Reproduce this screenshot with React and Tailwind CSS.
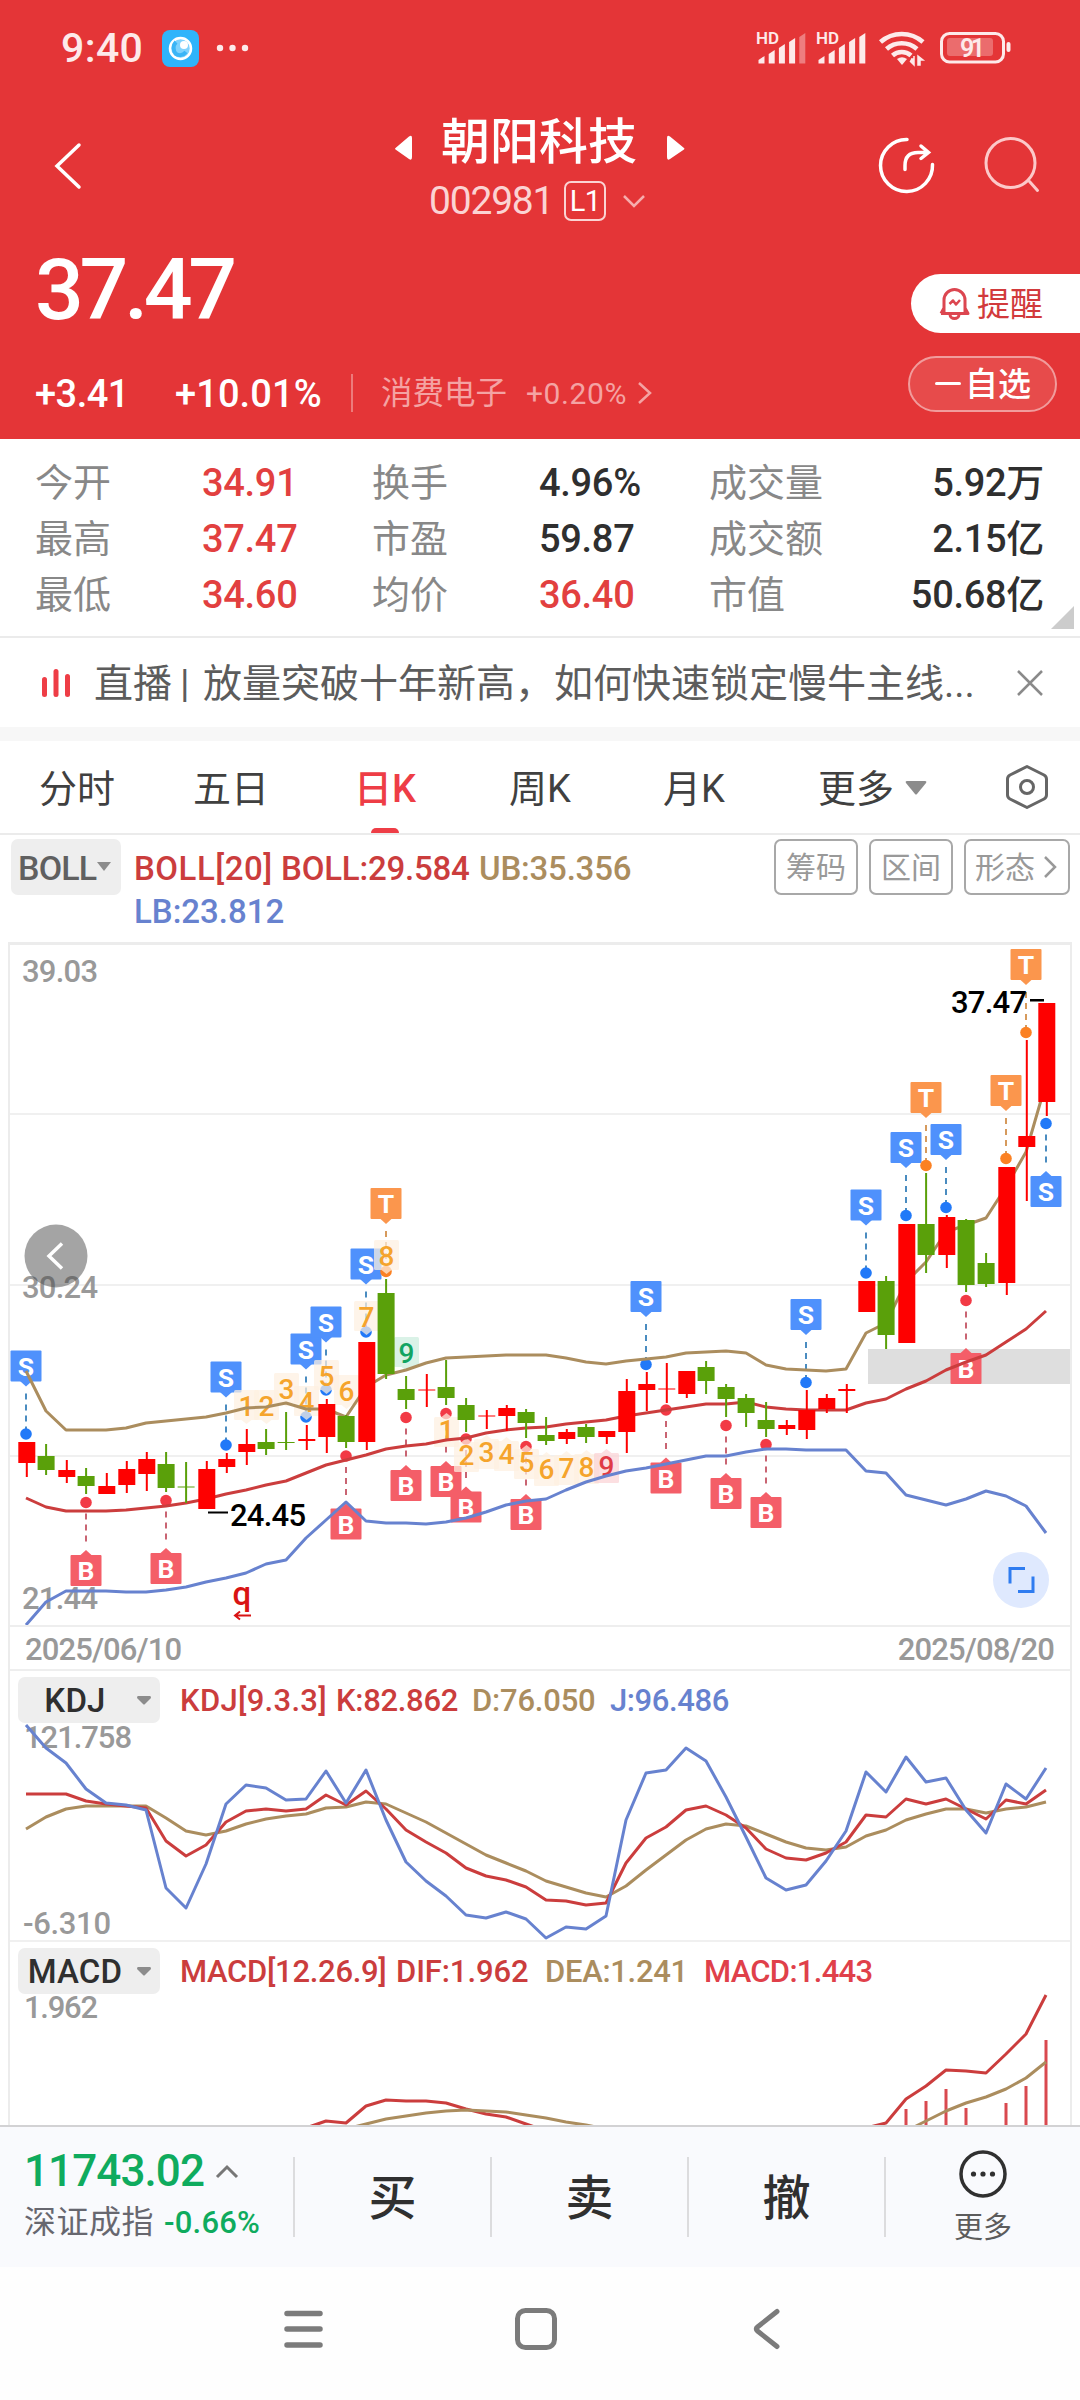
const FONT = "font-['Roboto','Noto_Sans_CJK_SC',sans-serif]";

const UP = '#fe0000';
const DOWN = '#5aa00a';
const RED = '#cb3d3d';
const GOLD = '#ab8d5e';
const BLUE = '#6782cf';

// [direction, high, body top, body bottom, low]
const CANDLES = [
  ['u', 1442, 1442, 1463, 1477], ['d', 1444, 1456, 1470, 1475], ['u', 1460, 1470, 1477, 1483], ['d', 1468, 1476, 1486, 1494],
  ['u', 1473, 1486, 1494, 1494], ['u', 1461, 1469, 1485, 1493], ['u', 1452, 1459, 1474, 1491], ['d', 1452, 1464, 1488, 1492],
  ['d', 1462, 1486.5, 1487.5, 1503], ['u', 1461, 1469, 1509, 1509], ['u', 1453, 1459, 1467, 1473], ['u', 1429, 1444, 1452, 1465],
  ['d', 1429, 1442, 1449, 1455], ['d', 1412, 1442, 1443, 1450], ['u', 1425, 1439, 1441, 1450], ['u', 1399, 1404, 1437, 1453],
  ['d', 1415, 1416, 1442, 1448], ['u', 1342, 1342, 1442, 1450], ['d', 1279, 1293, 1374, 1379], ['d', 1376, 1389, 1400, 1409],
  ['u', 1374, 1389.5, 1390.5, 1407], ['d', 1360, 1387, 1398, 1405], ['d', 1398, 1405, 1420, 1432], ['u', 1410, 1415.5, 1416.5, 1429],
  ['u', 1405, 1408, 1416, 1431], ['d', 1409, 1412, 1423, 1438], ['d', 1417, 1435, 1441, 1445], ['u', 1429, 1432, 1439, 1444],
  ['d', 1424, 1427, 1437, 1443], ['u', 1431, 1431, 1437, 1444], ['u', 1379, 1391, 1432, 1453], ['u', 1372, 1384, 1390, 1411],
  ['u', 1363, 1388.5, 1389.5, 1403], ['u', 1371, 1371, 1394, 1398], ['d', 1361, 1367, 1381, 1394], ['d', 1384, 1387, 1399, 1417],
  ['d', 1394, 1398, 1413, 1427], ['d', 1402, 1420, 1429, 1437], ['u', 1420, 1425, 1429, 1435], ['u', 1390, 1410, 1430, 1439],
  ['u', 1394, 1398, 1409, 1413], ['u', 1384, 1389, 1391, 1413], ['u', 1281, 1281, 1312, 1312], ['d', 1276, 1281, 1335, 1349],
  ['u', 1224, 1224, 1343, 1343], ['d', 1173, 1224, 1255, 1273], ['u', 1215, 1217, 1255, 1268], ['d', 1219, 1220, 1285, 1292],
  ['d', 1253, 1263, 1284, 1287], ['u', 1167, 1167, 1283, 1295], ['u', 1040, 1136, 1147, 1201], ['u', 1003, 1003, 1102, 1116],
];

const UPPER = [1371, 1411, 1430, 1430, 1430, 1428, 1423, 1421, 1419, 1417, 1413, 1408, 1407, 1403, 1409, 1409, 1417, 1387, 1375, 1370, 1363, 1358, 1357, 1356, 1355, 1355, 1355, 1358, 1362, 1364, 1361, 1359, 1357, 1353, 1352, 1351, 1353, 1365, 1369, 1370, 1371, 1369, 1333, 1323, 1282, 1262, 1232, 1225, 1218, 1187, 1152, 1083];
const MIDDLE = [1498, 1507, 1511, 1511, 1511, 1510, 1508, 1506, 1503, 1499, 1494, 1490, 1485, 1481, 1473, 1465, 1460, 1455, 1449, 1446, 1444, 1440, 1438, 1433, 1430, 1428, 1427, 1424, 1422, 1420, 1416, 1413, 1410, 1407, 1404, 1404, 1402, 1407, 1409, 1410, 1410, 1410, 1403, 1399, 1389, 1381, 1370, 1362, 1355, 1342, 1329, 1311];
const LOWER = [1625, 1602, 1591, 1591, 1591, 1592, 1592, 1590, 1587, 1582, 1578, 1573, 1564, 1560, 1538, 1520, 1502, 1521, 1523, 1523, 1524, 1522, 1518, 1512, 1505, 1501, 1499, 1490, 1482, 1476, 1471, 1468, 1464, 1460, 1456, 1456, 1452, 1449, 1449, 1450, 1450, 1450, 1471, 1473, 1495, 1500, 1505, 1499, 1491, 1496, 1506, 1533];

const KDJ_J = [1725, 1748, 1763, 1789, 1803, 1805, 1810, 1888, 1908, 1864, 1804, 1785, 1788, 1800, 1799, 1771, 1803, 1770, 1820, 1862, 1881, 1896, 1915, 1918, 1912, 1919, 1938, 1927, 1929, 1916, 1820, 1773, 1770, 1748, 1761, 1797, 1837, 1878, 1890, 1885, 1861, 1831, 1772, 1792, 1757, 1782, 1778, 1810, 1833, 1784, 1799, 1768];
const KDJ_K = [1794, 1794, 1794, 1801, 1804, 1806, 1808, 1841, 1856, 1845, 1822, 1811, 1809, 1811, 1809, 1795, 1805, 1791, 1809, 1830, 1842, 1853, 1868, 1876, 1880, 1887, 1900, 1901, 1905, 1903, 1863, 1838, 1827, 1810, 1806, 1815, 1828, 1849, 1858, 1860, 1853, 1842, 1815, 1817, 1799, 1804, 1799, 1809, 1819, 1800, 1804, 1790];
const KDJ_D = [1829, 1817, 1809, 1806, 1806, 1806, 1806, 1818, 1831, 1835, 1831, 1824, 1819, 1816, 1814, 1808, 1807, 1802, 1804, 1813, 1822, 1833, 1844, 1855, 1863, 1871, 1881, 1887, 1893, 1897, 1886, 1870, 1855, 1840, 1829, 1824, 1826, 1834, 1842, 1848, 1850, 1847, 1836, 1830, 1820, 1814, 1809, 1809, 1813, 1809, 1807, 1802];

const DIF_A = [2128, 2121, 2123, 2106, 2100, 2101, 2101, 2103, 2109, 2114, 2117, 2124, 2131];
const DIF_B = [2128, 2123, 2099, 2086, 2070, 2071, 2073, 2054, 2034, 1995];
const DEA_A = [2129, 2124, 2119, 2116, 2113, 2111, 2110, 2111, 2112, 2115, 2118, 2122, 2125, 2129];
const DEA_B = [2131, 2121, 2111, 2103, 2097, 2089, 2078, 2062];
const MACD_BARS = [2109, 2101, 2089, 2108, 2125, 2103, 2086, 2040];

// [letter, candle index, dot y, tag below the dot]
const SIGNALS = [
  ['S', 0, 1434], ['S', 10, 1445], ['S', 14, 1417], ['S', 15, 1390], ['S', 17, 1332], ['T', 18, 1271.5],
  ['S', 31, 1364.5], ['S', 39, 1382.5], ['S', 42, 1273], ['S', 44, 1215.5], ['T', 45, 1165.5], ['S', 46, 1207.5],
  ['T', 49, 1158.5], ['T', 50, 1032.5], ['S', 51, 1123.5, true],
  ['B', 3, 1502.5, true], ['B', 7, 1500.5, true], ['B', 16, 1456, true], ['B', 19, 1417.5, true], ['B', 21, 1413.5, true],
  ['B', 22, 1439, true], ['B', 25, 1446.5, true], ['B', 32, 1410, true], ['B', 35, 1425.5, true], ['B', 37, 1444.5, true],
  ['B', 47, 1300.5, true],
];

const SIGNAL_COLORS = {
  S: { tag: '#4f91fc', dot: '#2179f8', line: '#4a8cc0' },
  T: { tag: '#fb964d', dot: '#fb8123', line: '#d69a5c' },
  B: { tag: '#f45e68', dot: '#f23a45', line: '#c96472' },
};

// [digit, candle index, text centre y, badge below the candle]
const COUNTS = [
  ['1', 11, 1406], ['2', 12, 1406], ['3', 13, 1389], ['4', 14, 1402], ['5', 15, 1376], ['6', 16, 1391], ['7', 17, 1317],
  ['8', 18, 1256], ['9', 19, 1353], ['1', 21, 1430, true], ['2', 22, 1455, true], ['3', 23, 1452, true], ['4', 24, 1454, true],
  ['5', 25, 1462, true], ['6', 26, 1469, true], ['7', 27, 1468, true], ['8', 28, 1467, true], ['9', 29, 1466, true],
];

const px = (i) => 26 + i * 20;
const toPoints = (ys, start = 0) => ys.map((y, i) => `${px(i + start)},${y}`).join(' ');

function Line({ ys, start, color }) {
  return <polyline points={toPoints(ys, start)} fill="none" stroke={color} strokeWidth="3" strokeLinejoin="round" />;
}

function Signal({ kind, index, dot, below }) {
  const c = SIGNAL_COLORS[kind];
  const x = px(index);
  const top = below ? dot + 52.5 : dot - 83.5;
  const tip = below
    ? `M${x - 6} ${top + 0.5} L${x} ${top - 5} L${x + 6} ${top + 0.5}Z`
    : `M${x - 6} ${top + 30.5} L${x} ${top + 36} L${x + 6} ${top + 30.5}Z`;
  return (
    <g>
      <line
        x1={x}
        x2={x}
        y1={below ? dot + 11 : top + 43}
        y2={below ? top - 10 : dot - 5}
        stroke={c.line}
        strokeWidth="2"
        strokeDasharray="6 5"
      />
      <circle cx={x} cy={dot} r="5.8" fill={c.dot} />
      <rect x={x - 15.5} y={top} width="31" height="31" rx="1" fill={c.tag} />
      <path d={tip} fill={c.tag} />
      <text x={x} y={top + 25} textAnchor="middle" fontSize="26.5" fontWeight="700" fill="#fff">
        {kind}
      </text>
    </g>
  );
}

function Count({ digit, index, y, below }) {
  const x = px(index) + 0.5;
  const special = digit === '9';
  const fill = special ? (below ? '#fbd3d6' : '#cdeede') : '#fef1e1';
  const color = special ? (below ? '#e03a46' : '#12a462') : '#f5a42c';
  const cy = below ? y + 2 : y - 1;
  const tip = below
    ? `M${x - 5} ${cy - 15} L${x} ${cy - 19} L${x + 5} ${cy - 15}Z`
    : `M${x - 5} ${cy + 15} L${x} ${cy + 19} L${x + 5} ${cy + 15}Z`;
  return (
    <g>
      <g opacity="0.72">
        <rect x={x - 12.5} y={cy - 15} width="25" height="30" rx="1.5" fill={fill} />
        <path d={tip} fill={fill} />
      </g>
      <text x={x} y={y + 10} textAnchor="middle" fontSize="28" fontWeight="500" fill={color}>
        {digit}
      </text>
    </g>
  );
}

function Candle({ row, index }) {
  const [dir, high, top, bottom, low] = row;
  const x = px(index) + (dir === 'u' ? 0.8 : 0.1);
  const color = dir === 'u' ? UP : DOWN;
  return (
    <g fill={color}>
      <rect x={x - 1} y={high} width="2" height={low - high} />
      <rect x={x - 8.5} y={top} width="17" height={bottom - top} />
    </g>
  );
}

function AxisText({ x, y, w, fill = '#999', children }) {
  return (
    <text x={x} y={y} fontSize="31" fontWeight="500" fill={fill} textLength={w}>
      {children}
    </text>
  );
}

function StatusBar() {
  return (
    <div className="flex h-24 items-center pl-[61px] pr-[69px] text-[#fdeaea]">
      <span className="w-[101px] text-[41px] font-medium leading-none tracking-[0.4px]">9:40</span>
      <svg width="37" height="37" viewBox="0 0 37 37">
        <rect width="37" height="37" rx="8" fill="#2fb4fb" />
        <circle cx="18.5" cy="18.5" r="10.5" fill="#7fd2fd" stroke="#fff" strokeWidth="2.5" />
        <path d="M14 12 a7 8 0 0 0 0 12 a8 8 0 0 0 10 -2" fill="none" stroke="#3bb5f6" strokeWidth="4" />
        <circle cx="22" cy="15" r="4" fill="#fff" />
      </svg>
      <svg className="ml-[17px]" width="34" height="8" viewBox="0 0 34 8" fill="currentColor">
        <circle cx="4" cy="4" r="3.2" />
        <circle cx="16.5" cy="4" r="3.2" />
        <circle cx="29" cy="4" r="3.2" />
      </svg>
      <svg className="ml-auto" width="256" height="40" viewBox="755 28 256 40" fill="#fdeaea">
        {[0, 60].map((dx) => (
          <g key={dx}>
            <text x={756 + dx} y="43.5" fontSize="17" fontWeight="600" textLength="23">HD</text>
            {[56, 50, 44, 38, 33].map((y, i) => (
              <path
                key={y}
                d={`M${758.5 + dx + i * 10.2} ${y + 4} l6 -4 V63.5 h-6Z`}
                opacity={dx === 0 && i === 4 ? 0.4 : 1}
              />
            ))}
          </g>
        ))}
        <g fill="none" stroke="#fdeaea" strokeWidth="4.6">
          <path d="M880.5 42 A32 32 0 0 1 923 42" />
          <path d="M886.5 49 A23 23 0 0 1 917 49" />
          <path d="M892.5 55.5 A14 14 0 0 1 911 55.5" />
        </g>
        <path d="M897 59 Q902 55.5 907 59 L902 65Z" />
        <path d="M911 59 h3 v-3 v9 l-4 -4 M918 65 v-9 l5 4 h-3 v5Z" strokeWidth="1.5" stroke="#fdeaea" />
        <rect x="941.5" y="33.5" width="62" height="28.5" rx="8" fill="none" stroke="#fdeaea" strokeWidth="3" />
        <rect x="947" y="38" width="46" height="18" rx="3" opacity="0.3" />
        <rect x="1006.5" y="42" width="4" height="10" rx="2" />
        <text x="972.5" y="57" textAnchor="middle" fontSize="25" fontWeight="600" textLength="25">91</text>
      </svg>
    </div>
  );
}

function NavBar() {
  return (
    <div className="flex h-[136px] items-center px-[38px]">
      <svg width="60" height="60" viewBox="0 0 60 60" fill="none" stroke="#fff" strokeWidth="3.5" strokeLinecap="round">
        <path d="M41 11 L19 32 L41 53" />
      </svg>
      <div className="ml-[286px] w-[312px]">
        <div className="mt-[16px] flex h-14 items-center">
          <svg className="mt-2" width="28" height="30" viewBox="0 0 28 30" fill="#fff">
            <path d="M11.5 16 L25 4.500 Q28 2.500 28 6 V25 Q28 29 25 27 L11.500 17.500 Q10.500 16.800 11.500 16Z" />
          </svg>
          <h1 className="ml-[29px] w-[200px] text-[49px] font-medium leading-[56px]">朝阳科技</h1>
          <svg className="ml-[26px] mt-2" width="18" height="30" viewBox="0 0 18 30" fill="#fff">
            <path d="M0 6 Q0 2.500 3 4.500 L17 16 Q18 16.800 17 17.500 L3 27 Q0 29 0 25Z" />
          </svg>
        </div>
        <div className="mt-0.5 flex h-14 items-center pl-[45px]">
          <span className="w-[135px] text-[39px] leading-none tracking-[-1.2px] text-[#fbd3d3]">002981</span>
          <span className="flex h-10 w-[42px] items-center justify-center rounded-[7px] border-2 border-[#fbd3d3] text-[29px] leading-none tracking-tight">
            L1
          </span>
          <svg className="ml-4" width="24" height="14" viewBox="0 0 24 14" fill="none" stroke="#f6adad" strokeWidth="2.5">
            <path d="M2 2 L12 12 L22 2" />
          </svg>
        </div>
      </div>
      <svg className="ml-auto" width="166" height="60" viewBox="876 134.5 166 60" fill="none" stroke="#fff" strokeLinecap="round">
        <path d="M907 140 A26 26 0 1 0 932.5 165" strokeWidth="3.5" />
        <path d="M905 170 V166 Q905 153 918 153 H928 M921 146.5 L928.5 153 L921 159" strokeWidth="3.5" />
        <g stroke="#fcc9c9" strokeWidth="3">
          <circle cx="1010.5" cy="163.5" r="24.5" />
          <path d="M1029.5 182 L1037.5 191" />
        </g>
      </svg>
    </div>
  );
}

function Quote() {
  return (
    <>
      <div className="flex h-[114px] items-center pl-[35px]">
        <span className="mt-0.5 text-[86px] font-medium leading-none tracking-[-4.3px]">37.47</span>
        <div className="ml-auto mt-7 flex h-[59px] w-[169px] items-center rounded-l-full bg-white pl-7 text-[#d23a3c]">
          <svg width="31" height="34" viewBox="0 0 31 34" fill="none" stroke="#dc4650" strokeWidth="3" strokeLinejoin="round">
            <path d="M5 26 V14 a10.5 10.5 0 0 1 21 0 V26 M2 27.5 H29 L26 22 M2 27.5 L5 22" />
            <path d="M11 28.5 a4.5 4 0 0 0 9 0" />
            <path d="M10.5 18 L14 14.5 L17 18.5 L21 14" strokeWidth="2.5" />
          </svg>
          <span className="ml-[7px] mt-0.5 text-[33px] leading-none">提醒</span>
        </div>
      </div>
      <div className="flex h-[93px] items-center pl-[35px] pr-[23px]">
        <span className="mt-0.5 w-[140px] text-[38px] font-medium leading-none tracking-[-0.5px]">+3.41</span>
        <span className="mt-0.5 w-[176px] text-[38px] font-medium leading-none tracking-[0.1px]">+10.01%</span>
        <span className="h-[38px] w-0.5 bg-[#ed7b7b]" />
        <span className="ml-7 mt-0.5 w-[145px] text-[31.5px] leading-none text-[#f4a3a3]">消费电子</span>
        <span className="mt-0.5 w-[111px] text-[30px] leading-none tracking-[0.6px] text-[#f4a3a3]">+0.20%</span>
        <svg width="16" height="26" viewBox="0 0 16 26" fill="none" stroke="#f4a3a3" strokeWidth="2.5">
          <path d="M2 3 L13 13 L2 23" />
        </svg>
        <div className="mb-[18px] ml-auto flex h-14 w-[149px] items-center rounded-full border-2 border-[#f19c9c] bg-[#e74b4b] pl-[25px]">
          <span className="h-[3px] w-[26px] rounded bg-white" />
          <span className="ml-1 mt-0.5 text-[33px] font-medium leading-none">自选</span>
        </div>
      </div>
    </>
  );
}

const STATS = [
  [['今开', '34.91', true], ['换手', '4.96%'], ['成交量', '5.92万']],
  [['最高', '37.47', true], ['市盈', '59.87'], ['成交额', '2.15亿']],
  [['最低', '34.60', true], ['均价', '36.40', true], ['市值', '50.68亿']],
];

function Stats() {
  return (
    <section className="relative h-[197px] bg-white pl-[35px] pr-9 pt-4 text-[38px] leading-[56px]">
      {STATS.map((row) => (
        <div key={row[0][0]} className="flex h-14">
          {row.map(([label, value, red], i) => (
            <div key={label} className={i === 2 ? 'flex flex-1 justify-between' : 'flex w-[337px]'}>
              <span className={i === 2 ? 'text-[#888]' : 'w-[167px] text-[#888]'}>{label}</span>
              <span className={`font-medium tracking-[-0.3px] ${red ? 'text-[#e2403f]' : 'text-[#2f2f2f]'}`}>{value}</span>
            </div>
          ))}
        </div>
      ))}
      <svg className="absolute bottom-[7px] right-1.5" width="23" height="23" viewBox="0 0 23 23">
        <path d="M23 0 V23 H0Z" fill="#ccc" />
      </svg>
    </section>
  );
}

function LiveBanner() {
  return (
    <div className="flex h-[91px] items-center border-t-2 border-[#ebebeb] bg-white pl-[41px]">
      <svg width="30" height="30" viewBox="0 0 30 30" fill="#ee3d46">
        <rect x="1" y="9" width="5" height="20" rx="2.5" />
        <rect x="12.5" y="1" width="5" height="28" rx="2.5" />
        <rect x="24" y="6" width="5" height="23" rx="2.5" />
      </svg>
      <p className="ml-[23px] mt-0.5 flex w-[900px] whitespace-nowrap text-[39px] leading-[60px] text-[#5c5c5c]">
        <span className="w-[86px]">直播</span>
        <span className="w-[23px]">|</span>
        <span>放量突破十年新高，如何快速锁定慢牛主线...</span>
      </p>
      <svg className="ml-[22px]" width="28" height="28" viewBox="0 0 28 28" stroke="#8a8a8a" strokeWidth="2.5">
        <path d="M2 2 L26 26 M26 2 L2 26" />
      </svg>
    </div>
  );
}

function PeriodTabs() {
  return (
    <div className="flex h-[94px] items-center border-b-2 border-[#ebebeb] bg-white pl-[39px] text-[38px] leading-[60px] text-[#404040]">
      <div className="mt-[3px] flex">
        <span className="w-[154px]">分时</span>
        <span className="w-[161px]">五日</span>
        <span className="relative w-[155px] font-medium text-[#ee3d46]">
          日K
          <i className="absolute -bottom-[14px] left-[17px] h-[5px] w-7 rounded-t-full bg-[#ee3d46]" />
        </span>
        <span className="w-[154px]">周K</span>
        <span className="w-[155px]">月K</span>
        <span>更多</span>
      </div>
      <svg className="ml-[11px] mt-0.5" width="22" height="14" viewBox="0 0 22 14">
        <path d="M2 0 H20 Q22 0 21 2 L12 13 Q11 14 10 13 L1 2 Q0 0 2 0Z" fill="#8c8c8c" />
      </svg>
      <svg className="ml-[77px]" width="46" height="46" viewBox="0 0 46 46" fill="none" stroke="#666" strokeWidth="3" strokeLinejoin="round">
        <path d="M23 2.5 L40 11 Q42.5 12.5 42.5 15 V31 Q42.5 33.5 40 35 L23 43.5 L6 35 Q3.5 33.5 3.5 31 V15 Q3.5 12.5 6 11Z" />
        <circle cx="23" cy="23" r="6.5" />
      </svg>
    </div>
  );
}

function IndicatorBar() {
  return (
    <div className="flex h-[107px] bg-white pl-[11px] pr-2.5 pt-1">
      <div className="flex h-14 w-[110px] items-center rounded-[7px] bg-[#eee] pl-[7px] pt-0.5 text-[34px] font-medium leading-none tracking-[-0.8px] text-[#606060]">
        BOLL
        <svg className="mb-1 ml-px" width="14" height="9" viewBox="0 0 14 9">
          <path d="M0 0 H14 L7 9Z" fill="#8c8c8c" />
        </svg>
      </div>
      <div className="ml-[13px] w-[640px] pt-2 text-[33px] font-medium leading-[43px]">
        <div className="flex">
          <span className="w-[147px] tracking-[0.5px] text-[#cb3d3d]">BOLL[20]</span>
          <span className="w-[198px] tracking-[-0.2px] text-[#cb3d3d]">BOLL:29.584</span>
          <span className="tracking-[-0.2px] text-[#ab8d5e]">UB:35.356</span>
        </div>
        <div className="text-[#6782cf]">LB:23.812</div>
      </div>
      <div className="flex h-14 gap-[11px] text-[30px] leading-none text-[#999]">
        <span className="flex w-[84px] items-center justify-center rounded-[7px] border-2 border-[#a8a8a8] pt-0.5">筹码</span>
        <span className="flex w-[84px] items-center justify-center rounded-[7px] border-2 border-[#a8a8a8] pt-0.5">区间</span>
        <span className="flex w-[106px] items-center rounded-[7px] border-2 border-[#a8a8a8] pl-[9px] pt-0.5">
          形态
          <svg className="mb-0.5 ml-2" width="14" height="24" viewBox="0 0 14 24" fill="none" stroke="#999" strokeWidth="2.5">
            <path d="M2 2 L12 12 L2 22" />
          </svg>
        </span>
      </div>
    </div>
  );
}

function KChart() {
  return (
    <svg className="block" width="1060" height="683" viewBox="10 942 1060 683">
      <g fill="#f0f0f0">
        <rect x="10" y="942" width="1060" height="3" fill="#ececec" />
        <rect x="10" y="1113" width="1060" height="2" />
        <rect x="10" y="1284" width="1060" height="2" />
        <rect x="10" y="1455" width="1060" height="2" />
      </g>
      <rect x="868" y="1349" width="204" height="35" fill="#dedede" />
      <AxisText x="22" y="982" w="76">39.03</AxisText>
      <AxisText x="22" y="1298" w="76">30.24</AxisText>
      <AxisText x="22" y="1609" w="76">21.44</AxisText>
      <circle cx="56" cy="1256" r="31.5" fill="#4a4a4a" opacity="0.5" />
      <path d="M62 1243.5 L49 1256 L62 1268.5" fill="none" stroke="#fff" strokeWidth="3.5" />

      {SIGNALS.map(([kind, index, dot, below]) => (
        <Signal key={kind + index} kind={kind} index={index} dot={dot} below={below} />
      ))}
      {COUNTS.map(([digit, index, y, below]) => (
        <Count key={index} digit={digit} index={index} y={y} below={below} />
      ))}
      <Line ys={UPPER} color={GOLD} />
      <Line ys={MIDDLE} color={RED} />
      <Line ys={LOWER} color={BLUE} />
      {CANDLES.map((row, i) => (
        <Candle key={i} row={row} index={i} />
      ))}

      <rect x="208" y="1511.5" width="20" height="2" fill="#000" />
      <AxisText x="230" y="1526" w="76" fill="#000">24.45</AxisText>
      <AxisText x="951" y="1013" w="76" fill="#000">37.47</AxisText>
      <rect x="1030" y="999" width="14" height="2.5" fill="#000" />
      <text x="232.5" y="1605" fontSize="33" fontWeight="500" fill="#d91414">q</text>
      <path d="M251 1615.5 H236 M240 1611.5 L235 1615.5 L240 1619.5" fill="none" stroke="#d91414" strokeWidth="2" />

      <circle cx="1021" cy="1580" r="28" fill="#dfe9fe" />
      <path d="M1025 1568.5 H1010 V1583.5 M1033 1576.5 V1591.5 H1018" fill="none" stroke="#2f7cf0" strokeWidth="3" />
    </svg>
  );
}

function PaneHeader({ name, children }) {
  return (
    <div className="flex h-[51px] items-start pt-1.5 text-[31px] font-medium leading-[47px]">
      <div className="ml-2 flex h-[46px] w-[142px] items-center rounded-[7px] bg-[#eee] text-[33px] text-[#2f2f2f]">
        <span className="w-[114px] text-center tracking-[0.2px]">{name}</span>
        <svg className="ml-[5px]" width="14" height="9" viewBox="0 0 14 9">
          <path d="M1 0 H13 Q14 0 14 2 L8 8 Q7 9 6 8 L0 2 Q0 0 1 0Z" fill="#8c8c8c" />
        </svg>
      </div>
      {children}
    </div>
  );
}

function ChartPanel() {
  return (
    <div className="mx-2 border-x-2 border-[#ececec] bg-white">
      <KChart />
      <div className="flex h-[46px] items-center justify-between border-y-2 border-[#eee] pl-[15px] pr-4 pt-0.5 text-[31px] font-medium leading-none tracking-[-0.9px] text-[#999]">
        <span>2025/06/10</span>
        <span>2025/08/20</span>
      </div>

      <PaneHeader name="KDJ">
        <span className="ml-5 w-[156px] tracking-[0.3px] text-[#cb3d3d]">KDJ[9.3.3]</span>
        <span className="w-[136px] tracking-[-0.3px] text-[#cb3d3d]">K:82.862</span>
        <span className="w-[138px] tracking-[-0.2px] text-[#ab8d5e]">D:76.050</span>
        <span className="tracking-[-0.4px] text-[#6782cf]">J:96.486</span>
      </PaneHeader>
      <svg className="block overflow-visible" width="1060" height="218" viewBox="10 1722 1060 218">
        <AxisText x="24" y="1748" w="108">121.758</AxisText>
        <AxisText x="23" y="1934" w="88">-6.310</AxisText>
        <Line ys={KDJ_D} color={GOLD} />
        <Line ys={KDJ_K} color={RED} />
        <Line ys={KDJ_J} color={BLUE} />
      </svg>

      <div className="border-t-2 border-[#f0f0f0]">
        <PaneHeader name="MACD">
          <span className="ml-5 w-[216px] tracking-[-0.3px] text-[#cb3d3d]">MACD[12.26.9]</span>
          <span className="w-[149px] tracking-[-0.1px] text-[#cb3d3d]">DIF:1.962</span>
          <span className="w-[159px] tracking-[-0.3px] text-[#ab8d5e]">DEA:1.241</span>
          <span className="tracking-[-0.7px] text-[#e0404a]">MACD:1.443</span>
        </PaneHeader>
      </div>
      {/* series run past the pane's lower edge and are covered by the trade bar */}
      <svg className="block overflow-visible" width="1060" height="132" viewBox="10 1993 1060 132">
        <AxisText x="24" y="2018" w="74">1.962</AxisText>
        {MACD_BARS.map((y, i) => (
          <rect key={i} x={px(i + 44) - 1.5} y={y} width="3" height={2125 - y} fill="#d9494f" />
        ))}
        <Line ys={DIF_A} start={14} color={RED} />
        <Line ys={DIF_B} start={42} color={RED} />
        <Line ys={DEA_A} start={16} color={GOLD} />
        <Line ys={DEA_B} start={44} color={GOLD} />
      </svg>
    </div>
  );
}

function TradeBar() {
  return (
    <div className="relative flex h-[142px] items-center border-t-2 border-[#d2d2d4] bg-[#f9fafd]">
      <div className="w-[293px] pl-6">
        <div className="flex h-[50px] items-center">
          <span className="w-[191px] text-[44px] font-medium leading-none tracking-[-0.9px] text-[#0fab5e]">11743.02</span>
          <svg width="24" height="15" viewBox="0 0 24 15" fill="none" stroke="#777" strokeWidth="3">
            <path d="M2 13 L12 3 L22 13" />
          </svg>
        </div>
        <div className="flex h-[52px] items-center text-[32px] leading-none tracking-[0.5px] text-[#67676f]">
          深证成指
          <span className="ml-2.5 text-[31px] font-medium tracking-[0.2px] text-[#0fab5e]">-0.66%</span>
        </div>
      </div>
      {['买', '卖', '撤'].map((label) => (
        <div
          key={label}
          className="flex h-20 w-[197px] items-center justify-center border-l-2 border-[#dcdcde] pt-[3px] text-[48px] font-medium leading-none text-[#303030]"
        >
          {label}
        </div>
      ))}
      <div className="flex h-20 flex-1 flex-col items-center justify-center border-l-2 border-[#dcdcde]">
        <svg className="shrink-0" width="50" height="50" viewBox="0 0 50 50" fill="none" stroke="#303030" strokeWidth="3.5">
          <circle cx="25" cy="25" r="22" />
          <g fill="#303030" stroke="none">
            <circle cx="15.5" cy="25" r="2.6" />
            <circle cx="25" cy="25" r="2.6" />
            <circle cx="34.5" cy="25" r="2.6" />
          </g>
        </svg>
        <span className="mt-3 shrink-0 text-[29px] leading-[34px] text-[#5c5c5c]">更多</span>
      </div>
    </div>
  );
}

function SystemNav() {
  return (
    <div className="flex h-[133px] items-start justify-center gap-[188px] bg-[#fefefe] pr-2 pt-10">
      <svg width="44" height="44" viewBox="0 0 44 44" stroke="#7b7b7b" strokeWidth="5.5" strokeLinecap="round">
        <path d="M5 6.5 H38 M5 22 H38 M5 38 H38" />
      </svg>
      <svg width="44" height="44" viewBox="0 0 44 44" fill="none" stroke="#7b7b7b" strokeWidth="5">
        <rect x="3.5" y="3.5" width="37" height="37" rx="8" />
      </svg>
      <svg width="44" height="44" viewBox="0 0 44 44" fill="none" stroke="#7b7b7b" strokeWidth="5" strokeLinecap="round">
        <path d="M31 4.5 L11.5 20 Q9 22 11.5 24 L31 39.5" />
      </svg>
    </div>
  );
}

export default function App() {
  return (
    <div className={`${FONT} flex h-[2400px] w-[1080px] flex-col overflow-hidden bg-white`}>
      <header className="h-[439px] bg-[#e43537] text-white">
        <StatusBar />
        <NavBar />
        <Quote />
      </header>
      <Stats />
      <LiveBanner />
      <div className="h-3.5 bg-[#f7f7f7]" />
      <PeriodTabs />
      <IndicatorBar />
      <ChartPanel />
      <TradeBar />
      <SystemNav />
    </div>
  );
}
